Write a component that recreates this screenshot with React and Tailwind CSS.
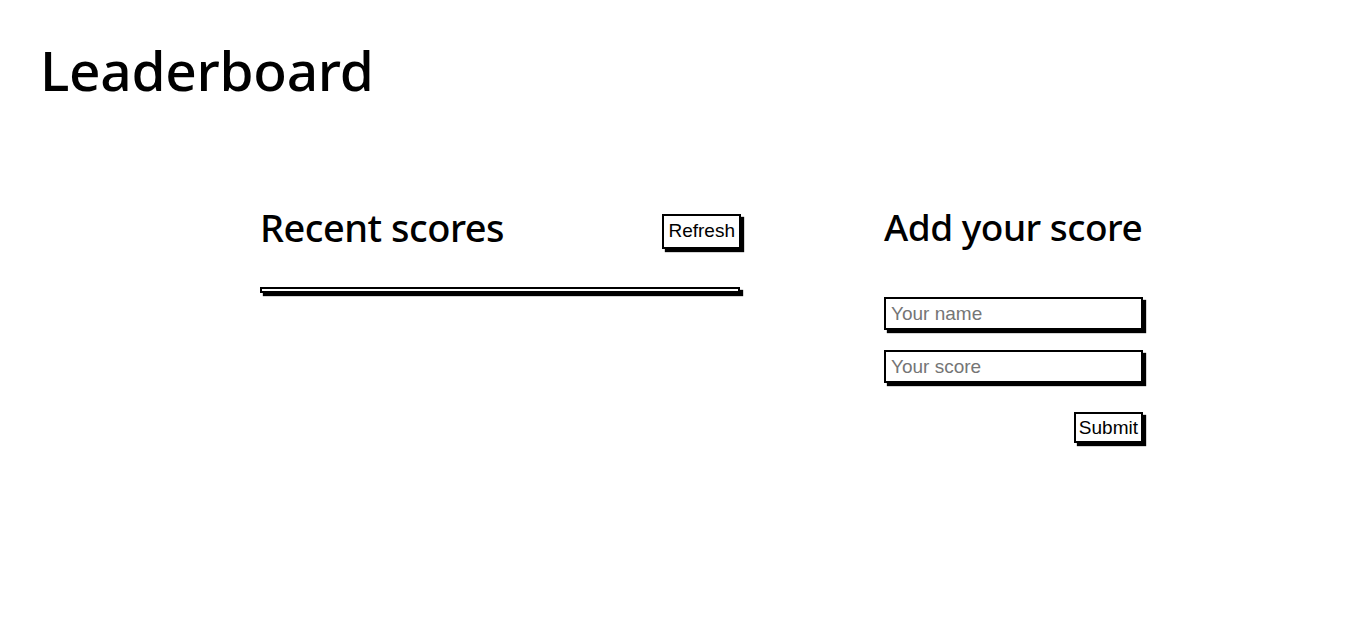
import React from 'react';

const shadow = 'shadow-[3px_3px_1px_0_#000]';

const App = () => {
    return (
        <div className="min-h-[625px] bg-white text-black font-['Noto_Sans',sans-serif]">
            <h1 className="pl-10 pt-[30px] text-[55px] leading-[80px] font-medium tracking-[-0.3px]">Leaderboard</h1>
            <div className="flex pl-[260px] pt-[92px] gap-[141px]">
                <section className="w-[483px]">
                    <div className="flex items-start justify-between">
                        <h2 className="text-[38px] leading-[50px] font-medium tracking-[-0.5px]">Recent scores</h2>
                        <button className={`mt-[12px] border-2 border-black bg-white px-[4px] h-[35px] mr-[2px] text-[19px] font-['Liberation_Sans',sans-serif] ${shadow}`}>
                            Refresh
                        </button>
                    </div>
                    <div className={`mt-[35px] w-[480px] border-2 border-black h-[6px] ${shadow}`}></div>
                </section>
                <section className="w-[262px]">
                    <h2 className="text-[37px] leading-[50px] font-medium tracking-[-0.5px] whitespace-nowrap">Add your score</h2>
                    <form className="flex flex-col mt-[45px]">
                        <input
                            placeholder="Your name"
                            className={`w-[259px] h-[33px] border-2 border-black px-[5px] text-[19px] font-['Liberation_Sans',sans-serif] placeholder:text-[#757575] ${shadow}`}
                        />
                        <input
                            placeholder="Your score"
                            className={`mt-[20px] w-[259px] h-[33px] border-2 border-black px-[5px] text-[19px] font-['Liberation_Sans',sans-serif] placeholder:text-[#757575] ${shadow}`}
                        />
                        <div className="flex justify-end w-[259px] mt-[29px]">
                            <button className={`border-2 border-black bg-white px-[3px] h-[31px] text-[19px] font-['Liberation_Sans',sans-serif] ${shadow}`}>
                                Submit
                            </button>
                        </div>
                    </form>
                </section>
            </div>
        </div>
    );
};

export default App;
